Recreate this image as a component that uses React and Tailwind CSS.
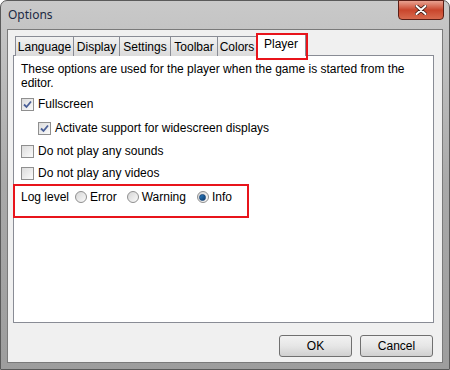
import React, { useState } from 'react';

const tabs = [
  ['Language', 'w-[59px]'],
  ['Display', 'w-[47px]'],
  ['Settings', 'w-[52px]'],
  ['Toolbar', 'w-[48px]'],
  ['Colors', 'w-[40px]'],
];

const Check = ({ checked, label, className = '' }) => (
  <label className={`flex items-center gap-[4px] h-[14px] ${className}`}>
    <span className="w-[13px] h-[13px] border border-[#8f8f8f] bg-gradient-to-br from-[#dcdcdc] to-[#fbfbfb] flex items-center justify-center">
      {checked && (
        <svg width="9" height="9" viewBox="0 0 9 9">
          <path d="M1 4.5 L3.5 7 L8 1.5" stroke="#4a5f97" strokeWidth="1.8" fill="none" />
        </svg>
      )}
    </span>
    <span>{label}</span>
  </label>
);

const Radio = ({ checked, label, className = '' }) => (
  <label className={`flex items-center gap-[3px] ${className}`}>
    <span className="w-[12px] h-[12px] rounded-full border border-[#8f8f8f] bg-gradient-to-br from-[#d6d6d6] to-[#fafafa] flex items-center justify-center">
      {checked && <span className="w-[7px] h-[7px] rounded-full bg-gradient-to-br from-[#2a7bc0] to-[#0b3e72] border border-[#16457a]" />}
    </span>
    <span>{label}</span>
  </label>
);

export default function App() {
  const [level] = useState('info');

  return (
    <div
      className="w-[450px] h-[370px] flex flex-col rounded-t-[7px] border border-[#5a5a5a] bg-gradient-to-b from-[#c9c9c9] via-[#a9a9a9] to-[#9d9d9d] px-[6px] pb-[6px] text-[12px] leading-[14px] text-black"
      style={{ fontFamily: '"Liberation Sans", Arial, sans-serif' }}
    >
      {/* Title bar */}
      <div className="h-[28px] shrink-0 flex items-start justify-between">
        <span
          className="pt-[7px] pl-[1px] text-[12px] text-[#1b2a44]"
          style={{ fontFamily: '"Noto Sans", "Open Sans", sans-serif' }}
        >
          Options
        </span>
        <div className="-mt-px -mr-[1px] w-[46px] h-[20px] rounded-b-[4px] border border-[#5b1f17] bg-gradient-to-b from-[#e8a190] via-[#c9452c] to-[#d76a4e] flex items-center justify-center">
          <svg width="12" height="10" viewBox="0 0 12 10">
            <path d="M1.5 1 L10.5 9 M10.5 1 L1.5 9" stroke="#3a1a14" strokeWidth="3.6" strokeLinecap="round" />
            <path d="M1.5 1 L10.5 9 M10.5 1 L1.5 9" stroke="#ffffff" strokeWidth="2" strokeLinecap="round" />
          </svg>
        </div>
      </div>

      {/* Client area */}
      <div className="flex-1 flex flex-col bg-[#f0f0f0] border border-[#7a7a7a] pl-[5px] pr-[8px] pt-[3px]">
        {/* Tab strip */}
        <div className="flex items-end h-[22px] relative z-10">
          {tabs.map(([t, w], i) => (
            <div
              key={t}
              className={`${w} h-[20px] -mb-px flex items-center justify-center border border-b-0 border-[#898c95] bg-gradient-to-b from-[#f2f2f2] to-[#dbdbdb] ${i === 0 ? 'ml-[2px]' : '-ml-px'}`}
            >
              {t}
            </div>
          ))}
          <div className="relative -ml-px w-[50px] h-[23px] -mb-px flex items-start justify-center pt-[3px] border border-b-0 border-[#898c95] bg-white">
            Player
            <div className="absolute -left-[1px] -top-[1px] w-[52px] h-[27px] border-2 border-[#e8141b]" />
          </div>
        </div>

        {/* Panel */}
        <div className="h-[268px] bg-white border border-[#898c95] pl-[7px] pt-[6px]">
          <p className="w-[395px]">
            These options are used for the player when the game is started from the editor.
          </p>
          <Check checked label="Fullscreen" className="mt-[7px]" />
          <Check checked label="Activate support for widescreen displays" className="mt-[10px] ml-[17px]" />
          <Check label="Do not play any sounds" className="mt-[9px]" />
          <Check label="Do not play any videos" className="mt-[8px]" />
          <div className="relative mt-[10px] flex items-center h-[14px]">
            <span className="w-[54px]">Log level</span>
            <Radio checked={level === 'error'} label="Error" />
            <Radio checked={level === 'warning'} label="Warning" className="ml-[10px]" />
            <Radio checked={level === 'info'} label="Info" className="ml-[11px]" />
            <div className="absolute -left-[8px] -top-[6px] w-[236px] h-[34px] border-2 border-[#e8141b]" />
          </div>
        </div>

        {/* Buttons */}
        <div className="flex justify-end gap-[8px] pt-[12px] pr-[1px]">
          {['OK', 'Cancel'].map((b) => (
            <button
              key={b}
              className="w-[73px] h-[22px] rounded-[3px] border border-[#707070] bg-gradient-to-b from-[#f2f2f2] via-[#e6e6e6] to-[#d0d0d0] text-[12px]"
            >
              {b}
            </button>
          ))}
        </div>
      </div>
    </div>
  );
}
